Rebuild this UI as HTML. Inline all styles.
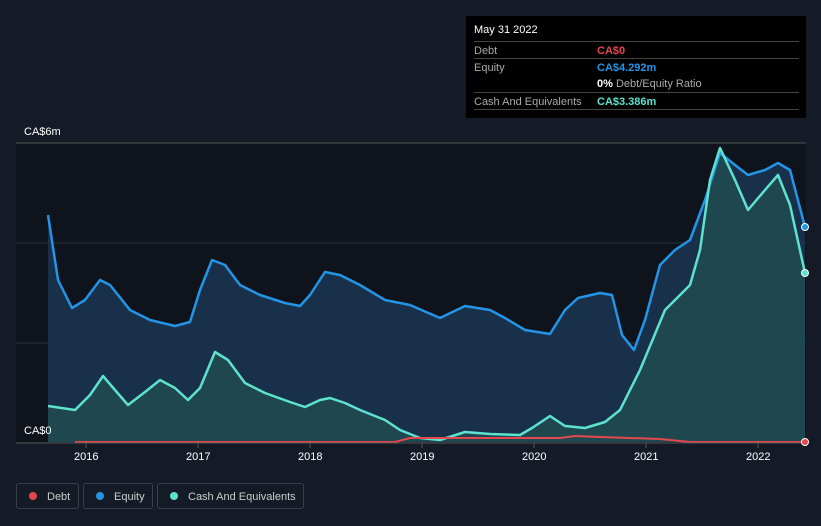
<!DOCTYPE html>
<html><head><style>
body{margin:0;width:821px;height:526px;background:#151b26;font-family:"Liberation Sans",sans-serif;overflow:hidden;position:relative}
.t{position:absolute;color:#fff;font-size:11px}
.tip{position:absolute;left:466px;top:16px;width:340px;height:102px;background:#000}
.row{position:absolute;left:8px;width:325px;border-top:1px solid #444;height:17px;font-size:11px;color:#aaa}
.row span{position:absolute;left:123px;top:3px}
.row b{position:absolute;left:0;top:3px;font-weight:normal}
.leg{position:absolute;top:483px;height:26px;border:1px solid #3a3f49;border-radius:3px;color:#ccc;font-size:11px;line-height:26px;box-sizing:border-box}
.leg i{display:inline-block;width:8px;height:8px;border-radius:50%;margin:0 10px 0 12px;vertical-align:-0px}
</style></head><body>
<svg width="821" height="526" style="position:absolute;left:0;top:0">
<rect x="16" y="143" width="790" height="299" fill="#0f141c"/>
<line x1="16" y1="143" x2="806" y2="143" stroke="#555" stroke-width="1"/>
<line x1="16" y1="243" x2="806" y2="243" stroke="#2a303a"/>
<line x1="16" y1="343" x2="806" y2="343" stroke="#2a303a"/>
<polygon fill="#1a3350" opacity="0.9" points="48,442 48,215 58,280 72,308 85,300 100,280 110,285 130,310 150,320 175,326 190,322 200,290 212,260 225,265 240,285 260,295 285,303 300,306 310,295 325,272 340,275 360,285 385,300 410,305 440,318 465,306 490,310 505,318 525,330 550,334 565,310 578,298 600,293 612,295 622,335 634,350 645,320 660,265 675,250 690,240 705,200 720,153 735,165 748,175 765,170 778,163 790,170 805,227 805,442"/>
<polygon fill="#1f4a50" opacity="0.9" points="48,442 48,406 75,410 90,395 103,376 115,390 128,405 145,392 160,380 175,388 188,400 200,388 215,352 228,360 245,383 265,393 290,402 305,407 320,400 330,398 345,403 360,410 385,420 400,430 420,438 440,440 465,432 490,434 520,435 532,428 550,416 565,426 585,428 605,422 620,410 640,370 665,310 690,285 700,250 710,180 720,148 735,180 748,210 765,190 778,175 790,205 805,273 805,442"/>
<polyline fill="none" stroke="#2394e6" stroke-width="2.5" stroke-linejoin="round" points="48,215 58,280 72,308 85,300 100,280 110,285 130,310 150,320 175,326 190,322 200,290 212,260 225,265 240,285 260,295 285,303 300,306 310,295 325,272 340,275 360,285 385,300 410,305 440,318 465,306 490,310 505,318 525,330 550,334 565,310 578,298 600,293 612,295 622,335 634,350 645,320 660,265 675,250 690,240 705,200 720,153 735,165 748,175 765,170 778,163 790,170 805,227"/>
<polyline fill="none" stroke="#5ee2cf" stroke-width="2.5" stroke-linejoin="round" points="48,406 75,410 90,395 103,376 115,390 128,405 145,392 160,380 175,388 188,400 200,388 215,352 228,360 245,383 265,393 290,402 305,407 320,400 330,398 345,403 360,410 385,420 400,430 420,438 440,440 465,432 490,434 520,435 532,428 550,416 565,426 585,428 605,422 620,410 640,370 665,310 690,285 700,250 710,180 720,148 735,180 748,210 765,190 778,175 790,205 805,273"/>
<polyline fill="none" stroke="#e5474e" stroke-width="2" points="75,442 395,442 410,438 460,438 560,438 575,436 600,437 660,439 690,442 805,442"/>
<line x1="16" y1="443" x2="806" y2="443" stroke="#555"/>
<g stroke="#555"><line x1="86" y1="443" x2="86" y2="448"/><line x1="198" y1="443" x2="198" y2="448"/><line x1="310" y1="443" x2="310" y2="448"/><line x1="422" y1="443" x2="422" y2="448"/><line x1="534" y1="443" x2="534" y2="448"/><line x1="646" y1="443" x2="646" y2="448"/><line x1="758" y1="443" x2="758" y2="448"/></g>
<circle cx="805" cy="227" r="3.5" fill="#2394e6" stroke="#fff" stroke-width="1"/>
<circle cx="805" cy="273" r="3.5" fill="#5ee2cf" stroke="#fff" stroke-width="1"/>
<circle cx="805" cy="442" r="3.5" fill="#e5474e" stroke="#fff" stroke-width="1"/>
</svg>
<div class="t" style="left:24px;top:126px">CA$6m</div>
<div class="t" style="left:24px;top:425px">CA$0</div>
<div class="t" style="left:74px;top:451px">2016</div>
<div class="t" style="left:186px;top:451px">2017</div>
<div class="t" style="left:298px;top:451px">2018</div>
<div class="t" style="left:410px;top:451px">2019</div>
<div class="t" style="left:522px;top:451px">2020</div>
<div class="t" style="left:634px;top:451px">2021</div>
<div class="t" style="left:746px;top:451px">2022</div>
<div class="tip">
<div style="position:absolute;left:8px;top:8px;color:#fff;font-size:11px">May 31 2022</div>
<div class="row" style="top:25px"><b>Debt</b><span style="color:#e5474e;font-weight:bold">CA$0</span></div>
<div class="row" style="top:42px"><b>Equity</b><span style="color:#2394e6;font-weight:bold">CA$4.292m</span></div>
<div class="row" style="top:59px;border-top:none"><span><b style="position:static;color:#fff;font-weight:bold">0%</b> Debt/Equity Ratio</span></div>
<div class="row" style="top:76px"><b>Cash And Equivalents</b><span style="color:#5ee2cf;font-weight:bold">CA$3.386m</span></div>
<div class="row" style="top:93px;height:0"></div>
</div>
<div class="leg" style="left:16px;width:63px"><i style="background:#e5474e"></i>Debt</div>
<div class="leg" style="left:83px;width:70px"><i style="background:#2394e6"></i>Equity</div>
<div class="leg" style="left:157px;width:147px"><i style="background:#5ee2cf"></i>Cash And Equivalents</div>
</body></html>
